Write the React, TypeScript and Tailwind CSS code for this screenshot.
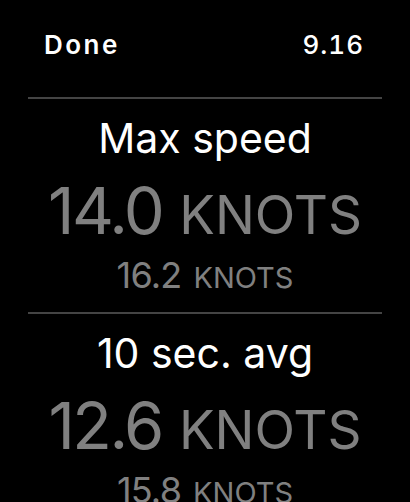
import React from "react";

function Section({ title, value, sub }: { title: string; value: string; sub: string }) {
  return (
    <div className="flex flex-col items-center shrink-0">
      <div className="mt-[19px] text-[41px] leading-none text-white">{title}</div>
      <div className="mt-[19px] flex items-baseline gap-[17px] leading-none text-[#808080] whitespace-nowrap">
        <span className="text-[65px] tracking-[-2.5px]">{value}</span>
        <span className="text-[53px]">KNOTS</span>
      </div>
      <div className="mt-[14px] flex items-baseline gap-[12px] leading-none text-[#808080] whitespace-nowrap">
        <span className="text-[36px] tracking-[-0.8px]">{sub}</span>
        <span className="text-[29px]">KNOTS</span>
      </div>
    </div>
  );
}

export default function App() {
  return (
    <div
      className="w-[410px] h-[502px] bg-black overflow-hidden flex flex-col"
      style={{ fontFamily: "Inter, 'Noto Sans', sans-serif" }}
    >
      <div className="shrink-0 mt-[32px] flex justify-between pl-[44px] pr-[46px] text-[26px] leading-none text-white">
        <span className="font-semibold tracking-[2.5px]">Done</span>
        <span className="font-medium tabular-nums tracking-[1px]">9.16</span>
      </div>
      <div className="shrink-0 mt-[39px] mx-[28px] h-[2px] bg-[#444444]" />
      <Section title="Max speed" value="14.0" sub="16.2" />
      <div className="shrink-0 mt-[19px] mx-[28px] h-[2px] bg-[#444444]" />
      <Section title="10 sec. avg" value="12.6" sub="15.8" />
    </div>
  );
}
